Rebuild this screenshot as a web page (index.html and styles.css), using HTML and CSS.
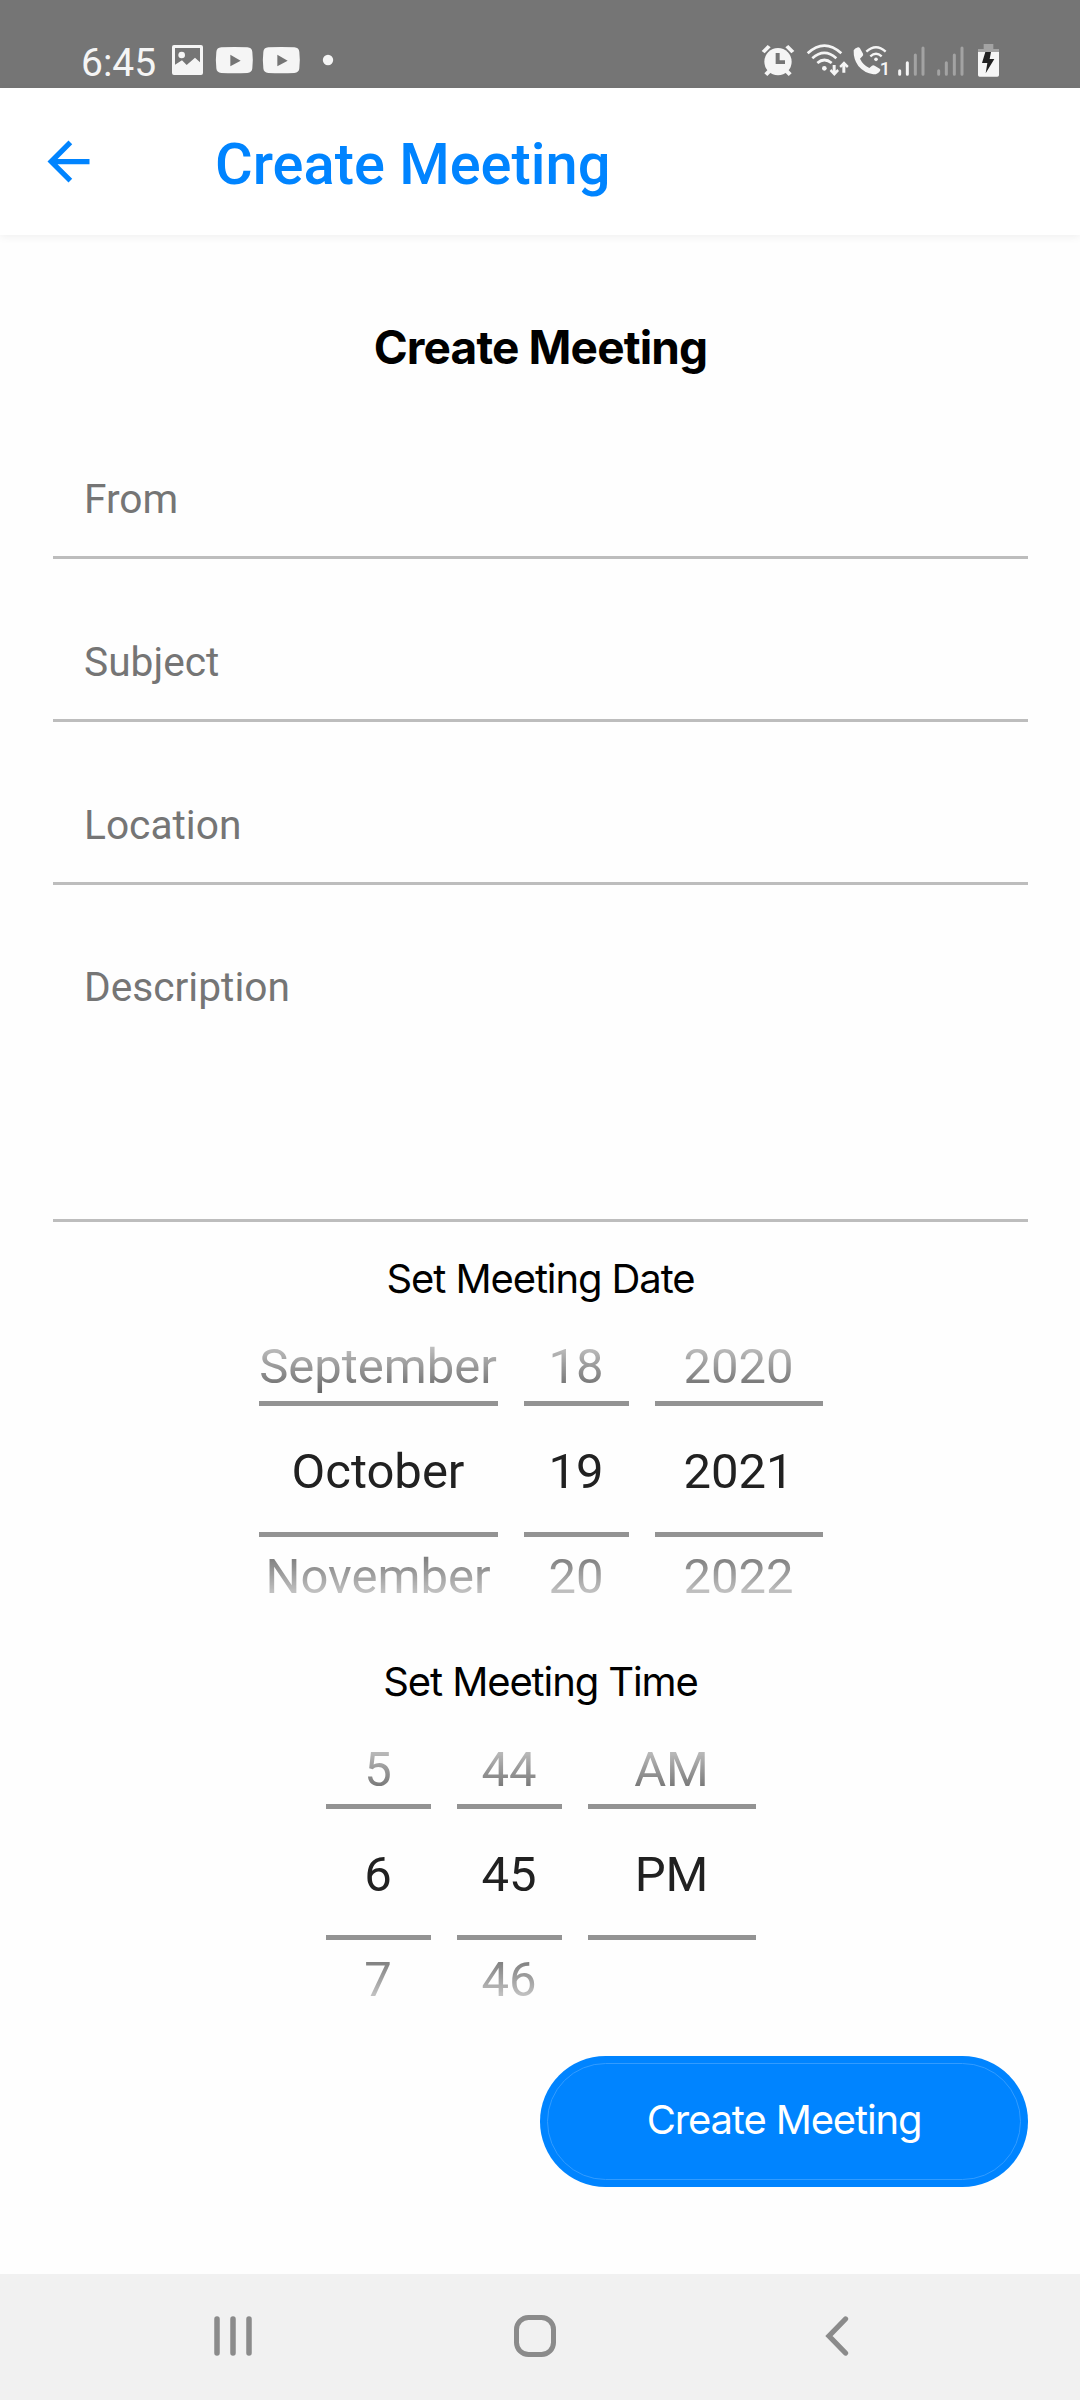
FILE: index.html
```html
<!DOCTYPE html>
<html lang="en">
<head>
<meta charset="utf-8">
<title>Create Meeting</title>
<link rel="stylesheet" href="styles.css">
</head>
<body>
<div class="status">
  <span class="clock">6:45</span>
  <svg class="notices" width="166" height="68" viewBox="330 0 498 204">
    <path fill="#f5f5f5" fill-rule="evenodd" d="M342 75h81q6 0 6 6v78q0 6-6 6h-81q-6 0-6-6V81q0-6 6-6zM345 84v50l21-13 14 14 25-22 15 14V84z"/>
    <circle cx="365" cy="105" r="10" fill="#f5f5f5"/>
    <path fill="#f5f5f5" fill-rule="evenodd" d="M484 82q39-2 78 0 14 1 15 14 3 25 0 49-1 13-15 14-39 2-78 0-14-1-15-14-3-24 0-49 1-13 15-14zM511 104v35l31-17z"/>
    <path fill="#f5f5f5" fill-rule="evenodd" d="M625 82q39-2 78 0 14 1 15 14 3 25 0 49-1 13-15 14-39 2-78 0-14-1-15-14-3-24 0-49 1-13 15-14zM652 104v35l31-17z"/>
    <circle cx="804" cy="120" r="15.500" fill="#f5f5f5"/>
  </svg>
  <svg class="signals" width="280" height="68" viewBox="0 0 840 204">
    <g fill="#f5f5f5">
      <circle cx="114" cy="125" r="41"/>
      <path d="M65 93l18-18 9 7-18 18zM163 93l-18-18-9 7 18 18zM73 160l12-12 9 8-12 12zM155 160l-12-12-9 8 12 12z"/>
      <path fill="#757575" d="M107 99h12v22h16v11h-28z"/>
      <circle cx="253" cy="145" r="7"/>
      <path d="M278 135h9v17l5-5 5 6-14 15-14-15 5-6 4 5zM307 158h9v-19l5 5 5-6-14-14-14 14 5 6 4-5z"/>
      <path d="M341 91q3-6 13-9 3-1 6 3l9 16q2 5-2 8l-7 7q9 19 28 28l8-7q4-3 8 0l15 9q4 3 1 7-8 11-20 10-27-4-45-25-15-20-14-47z"/>
      <circle cx="408" cy="118" r="5.500"/>
    </g>
    <g fill="none" stroke="#f5f5f5" stroke-width="8">
      <path d="M203 100q50-46 101 0M217 115q36-33 72 0M232 129q21-18 43 0"/>
      <path stroke-width="7" d="M379 95q29-26 58 0M391 109q17-15 34 0"/>
    </g>
    <text x="419" y="164" class="sim">1</text>
    <g stroke-width="9" stroke-linecap="round" stroke="#f5f5f5">
      <path d="M479 152v11M502 128v35"/>
      <path stroke="#a3a3a3" d="M526 105v58M549 84v79M596 152v11M619 128v35M643 105v58M666 84v79"/>
    </g>
    <path fill="#a3a3a3" d="M731 72h29v15h17v15h-63V87h17z"/>
    <path fill="#f5f5f5" d="M714 96h63v69q0 5-5 5h-53q-5 0-5-5z"/>
    <path fill="#212121" d="M736 96h17l-4 21h14l-26 43 5-31h-16z"/>
  </svg>
</div>
<header class="appbar">
  <svg class="back" width="63" height="63" viewBox="0 0 24 24"><path fill="#0084ff" d="M20 11H7.830l5.590-5.590L12 4l-8 8 8 8 1.410-1.410L7.830 13H20v-2z"/></svg>
  <span class="bar-title">Create Meeting</span>
</header>
<main class="form">
  <h1 class="heading"><span>Create Meeting</span></h1>
  <div class="field">From</div>
  <div class="field">Subject</div>
  <div class="field">Location</div>
  <div class="field area">Description</div>
  <h2 class="label date"><span>Set Meeting Date</span></h2>
  <div class="picker">
    <div class="wheel month"><div class="values"><span>September</span><span>October</span><span>November</span></div></div>
    <div class="wheel"><div class="values"><span>18</span><span>19</span><span>20</span></div></div>
    <div class="wheel wide"><div class="values"><span>2020</span><span>2021</span><span>2022</span></div></div>
  </div>
  <h2 class="label time"><span>Set Meeting Time</span></h2>
  <div class="picker">
    <div class="wheel"><div class="values"><span>5</span><span>6</span><span>7</span></div></div>
    <div class="wheel"><div class="values"><span>44</span><span>45</span><span>46</span></div></div>
    <div class="wheel wide"><div class="values"><span>AM</span><span>PM</span></div></div>
  </div>
  <div class="button"><span>Create Meeting</span></div>
</main>
<nav class="nav">
  <svg width="40" height="44" viewBox="0 0 40 44"><path d="M4 5v34M20 5v34M36 5v34" stroke="#8b8b8b" stroke-width="5.500" stroke-linecap="round"/></svg>
  <svg class="home" width="44" height="44" viewBox="0 0 44 44"><rect x="3.500" y="3.500" width="37" height="37" rx="12" fill="none" stroke="#8b8b8b" stroke-width="5"/></svg>
  <svg width="26" height="44" viewBox="0 0 26 44"><path d="M21.500 5L5 22l16.500 17" fill="none" stroke="#8b8b8b" stroke-width="5.300" stroke-linecap="round"/></svg>
</nav>
</body>
</html>
```
FILE: styles.css
```css
* { box-sizing: border-box; }
body {
  margin: 0;
  width: 1080px;
  height: 2400px;
  display: flex;
  flex-direction: column;
  background: #fefefe;
  font-family: Roboto, sans-serif;
  overflow: hidden;
}
svg { display: block; flex: none; }
.status {
  height: 88px;
  background: #757575;
  display: flex;
  align-items: flex-end;
  padding: 0 60px 0 81px;
}
.clock {
  width: 89px;
  font-size: 39px;
  line-height: 46px;
  padding-bottom: 2px;
  color: #f5f5f5;
}
.signals { margin-left: auto; }
.sim { font: 500 56px Roboto, sans-serif; fill: #f5f5f5; }
.appbar {
  height: 147px;
  background: #fff;
  display: flex;
  align-items: center;
  padding-left: 37px;
  box-shadow: 0 2px 8px rgba(0, 0, 0, .06);
}
.back { margin-right: 115px; }
.bar-title {
  color: #0084ff;
  font-size: 57.750px;
  font-weight: 500;
  line-height: 68px;
  padding-top: 4px;
}
.form {
  flex: 1;
  padding: 0 52px 0 53px;
  display: flex;
  flex-direction: column;
}
.heading {
  margin: 83px 0 0;
  height: 58px;
  font: 700 46px/58px Inter, sans-serif;
  letter-spacing: -.850px;
  text-align: center;
  color: #000;
}
.field {
  height: 163px;
  padding: 78px 31px 0;
  border-bottom: 3px solid #bdbdbd;
  color: #757575;
  font-size: 40.700px;
  line-height: 50px;
}
.heading + .field { height: 183px; padding-top: 98px; }
.field.area { height: 337px; padding-top: 77px; }
.label {
  margin: 0;
  height: 50px;
  font: 400 40px/50px Inter, sans-serif;
  letter-spacing: -1.100px;
  text-align: center;
  color: #000;
}
.date { margin-top: 32px; }
.time { margin-top: 28px; }
.picker {
  height: 315px;
  margin-top: 10px;
  padding-left: 1px;
  display: flex;
  justify-content: center;
  gap: 26px;
}
.wheel {
  width: 105px;
  background:
    linear-gradient(#939393, #939393) 0 87px / 100% 5px no-repeat,
    linear-gradient(#939393, #939393) 0 218px / 100% 5px no-repeat;
}
.wheel.month { width: 239px; }
.wheel.wide { width: 168px; }
.values {
  height: 315px;
  padding-right: 1px;
  display: flex;
  flex-direction: column;
  align-items: center;
  white-space: nowrap;
  font-size: 49px;
  line-height: 105px;
  color: #212121;
  -webkit-mask-image: linear-gradient(transparent, #000 115px, #000 195px, transparent 310px);
  mask-image: linear-gradient(transparent, #000 115px, #000 195px, transparent 310px);
}
.values span { height: 105px; }
.button {
  align-self: flex-end;
  width: 488px;
  height: 131px;
  margin-top: 24px;
  padding: 7px;
  border-radius: 66px;
  background: #0084ff;
  color: #fff;
  font: 400 40px/111px Inter, sans-serif;
  letter-spacing: -1.150px;
  text-align: center;
}
.button span {
  display: block;
  height: 117px;
  border: 1px solid #329cff;
  border-radius: 59px;
}
.nav {
  height: 126px;
  background: #f1f1f1;
  display: flex;
  align-items: center;
  justify-content: space-between;
  padding: 0 230px 2px 213px;
}
.home { margin-right: 7px; }
```
